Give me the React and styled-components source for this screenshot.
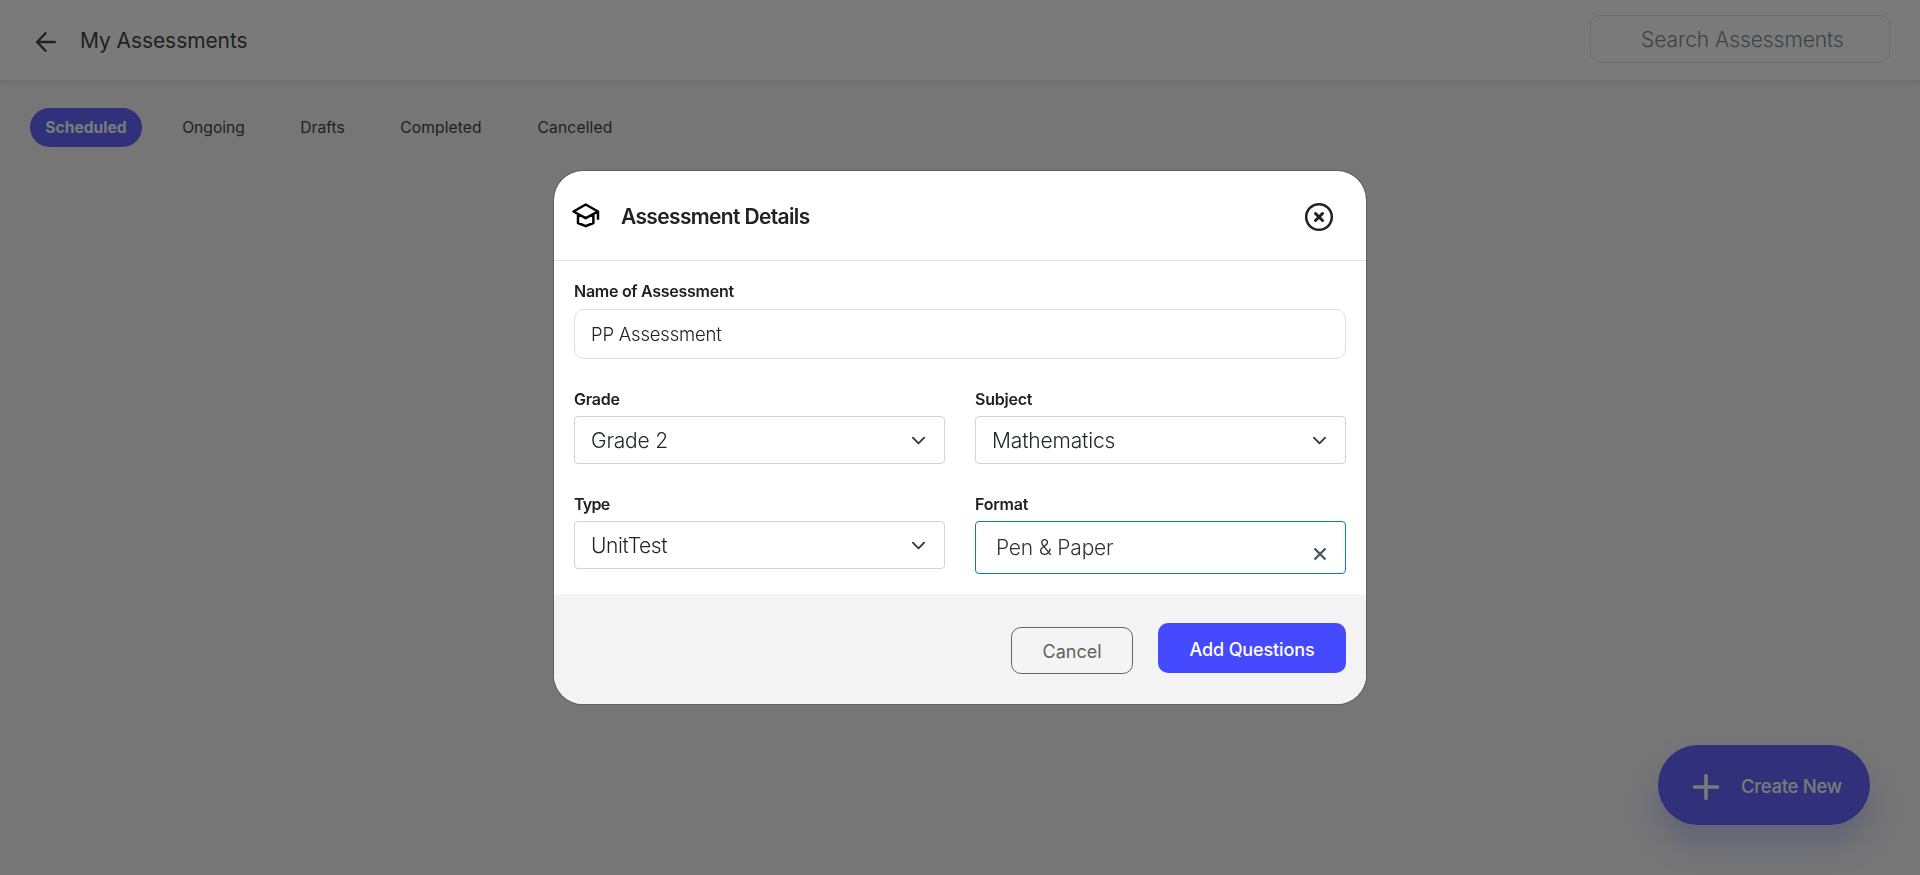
import React from "react";
import styled, { createGlobalStyle } from "styled-components";

const Global = createGlobalStyle`
  * { box-sizing: border-box; }
  html, body, #root { height: 100%; }
  body { margin: 0; background: #f4f4f4; color: #212121; font-family: Inter, "Liberation Sans", sans-serif; overflow: hidden; }
  button, input { font-family: inherit; margin: 0; }
`;

const Page = styled.div`
  height: 875px;
  display: flex;
  flex-direction: column;
`;
const TopBar = styled.header`
  height: 80px;
  flex: none;
  background: #fff;
  box-shadow: 0 2px 5px rgba(0, 0, 0, 0.1);
  display: flex;
  align-items: center;
  padding: 0 30px 0 33px;
`;
const BackIcon = styled.svg`
  width: 26px;
  height: 26px;
  margin-top: 4px;
  fill: none;
  stroke: #212121;
  stroke-width: 2.4;
  stroke-linecap: round;
  stroke-linejoin: round;
`;
const Text = styled.span`
  font-size: ${(p) => p.$size}px;
  font-weight: ${(p) => p.$weight || 400};
  letter-spacing: ${(p) => p.$track || 0}px;
  line-height: 24px;
  white-space: nowrap;
`;
const PageTitle = styled(Text)`
  margin: 2px 0 0 21px;
  flex: 1;
`;
const Search = styled.input`
  width: 300px;
  height: 48px;
  margin-bottom: 2px;
  border: 1px solid #dcdcdc;
  border-radius: 10px;
  background: transparent;
  padding: 0 10px 0 50px;
  font-size: 21px;
  font-weight: 350;
  letter-spacing: -0.05px;
  &::placeholder { color: #6c757d; opacity: 1; }
`;
const Tabs = styled.nav`
  display: flex;
  gap: 25px;
  padding: 28px 30px;
  flex: 1;
`;
const Tab = styled.button`
  width: ${(p) => p.$w}px;
  height: 39px;
  border: 0;
  padding: 0;
  border-radius: 20px;
  white-space: nowrap;
  font-size: 15.6px;
  letter-spacing: ${(p) => p.$track || 0}px;
  font-weight: ${(p) => (p.$active ? 700 : 400)};
  background: ${(p) => (p.$active ? "#464aff" : "transparent")};
  color: ${(p) => (p.$active ? "#fff" : "#212121")};
`;
const CreateButton = styled.button`
  align-self: flex-end;
  width: 212px;
  height: 80px;
  margin: 0 50px 50px 0;
  border: 0;
  border-radius: 40px;
  background: #464aff;
  color: #fff;
  box-shadow: 0 20px 30px rgba(70, 74, 255, 0.28);
  display: flex;
  align-items: center;
  padding: 4px 0 0 34px;
  gap: 21px;
`;
const PlusIcon = styled.svg`
  width: 28px;
  height: 28px;
  fill: none;
  stroke: #fff;
  stroke-width: 3.6;
  stroke-linecap: round;
`;
const CreateLabel = styled(Text)`
  margin-top: -3px;
`;

const Backdrop = styled.div`
  position: fixed;
  inset: 0;
  background: rgba(33, 33, 33, 0.6);
  display: flex;
  justify-content: center;
  align-items: flex-start;
  padding-top: 170px;
`;
const Dialog = styled.section`
  width: 814px;
  height: 535px;
  border: 1px solid rgba(0, 0, 0, 0.2);
  border-radius: 30px;
  background: #fff;
  background-clip: padding-box;
  overflow: hidden;
  display: flex;
  flex-direction: column;
`;
const DialogHeader = styled.div`
  height: 90px;
  flex: none;
  border-bottom: 1px solid #dee0e0;
  display: flex;
  align-items: center;
  padding: 2px 32px 0 17px;
`;
const CapIcon = styled.svg`
  width: 30px;
  height: 30px;
  margin-top: -3px;
  fill: none;
  stroke: #000;
  stroke-width: 2.5;
  stroke-linejoin: round;
`;
const DialogTitle = styled(Text)`
  margin: 1px 0 0 20px;
  flex: 1;
`;
const CloseIcon = styled.svg`
  width: 30px;
  height: 30px;
  margin-top: 1px;
  fill: none;
  stroke: #212121;
  stroke-width: 2.5;
  stroke-linecap: round;
`;
const Form = styled.div`
  height: 333px;
  flex: none;
  padding: 18px 20px 0;
  display: grid;
  grid-template-columns: 371px 371px;
  column-gap: 30px;
  grid-template-rows: 108px 105px auto;
`;
const Field = styled.label`
  display: flex;
  flex-direction: column;
  grid-column: ${(p) => (p.$wide ? "1 / -1" : "auto")};
`;
const Label = styled(Text)`
  height: 30px;
  font-size: 16px;
  font-weight: 600;
  letter-spacing: ${(p) => p.$track || -0.22}px;
`;
const NameBox = styled.div`
  height: 50px;
  border: 1px solid #dee0e0;
  border-radius: 10px;
  display: flex;
  align-items: center;
  padding: 0 16px;
`;
const Select = styled.div`
  height: ${(p) => (p.$focus ? 53 : 48)}px;
  margin-top: -1px;
  border: 1px solid ${(p) => (p.$focus ? "#0d73e0" : "#ced4da")};
  border-radius: 4px;
  display: flex;
  align-items: center;
  justify-content: space-between;
  padding: ${(p) => (p.$focus ? "0 18px 0 20px" : "1px 18px 0 16px")};
  color: ${(p) => (p.$focus ? "#333" : "#212529")};
`;
const Chevron = styled.svg`
  width: 15px;
  height: 15px;
  fill: none;
  stroke: #343a40;
  stroke-width: 2;
  stroke-linecap: round;
  stroke-linejoin: round;
`;
const ClearIcon = styled.svg`
  width: 14px;
  height: 14px;
  margin-top: 12px;
  fill: none;
  stroke: #44566a;
  stroke-width: 2.3;
`;
const Footer = styled.div`
  flex: 1;
  background: #f4f4f4;
  display: flex;
  justify-content: flex-end;
  align-items: flex-start;
  gap: 25px;
  padding: 29px 20px 0;
`;
const Action = styled.button`
  padding: 2px 0 0;
  white-space: nowrap;
  font-size: 18px;
  letter-spacing: ${(p) => p.$track || 0}px;
  border-radius: 10px;
`;
const Cancel = styled(Action)`
  width: 122px;
  height: 47px;
  margin-top: 4px;
  border: 1px solid #666;
  background: transparent;
  color: #616161;
`;
const Primary = styled(Action)`
  width: 188px;
  height: 50px;
  border: 0;
  background: #464aff;
  color: #fff;
  font-weight: 500;
`;

const tabs = [
  { name: "Scheduled", w: 112, active: true },
  { name: "Ongoing", w: 93 },
  { name: "Drafts", w: 75 },
  { name: "Completed", w: 112, track: 0.1 },
  { name: "Cancelled", w: 106, track: 0.15 },
];

const Down = () => (
  <Chevron viewBox="0 0 16 16"><path d="m2 5 6 6 6-6" /></Chevron>
);

export default function App() {
  return (
    <>
      <Global />
      <Page>
        <TopBar>
          <BackIcon viewBox="0 0 26 26"><path d="M21.800 13H4M12.500 4.200L4.200 13l8.300 8.800" /></BackIcon>
          <PageTitle $size={21} $track={-0.08}>My Assessments</PageTitle>
          <Search placeholder="Search Assessments" />
        </TopBar>
        <Tabs>
          {tabs.map((t) => (
            <Tab key={t.name} $w={t.w} $active={t.active} $track={t.track}>{t.name}</Tab>
          ))}
        </Tabs>
        <CreateButton>
          <PlusIcon viewBox="0 0 28 28"><path d="M14 2.500v23M2.500 14h23" /></PlusIcon>
          <CreateLabel $size={18.5} $weight={500} $track={-0.3}>Create New</CreateLabel>
        </CreateButton>
      </Page>
      <Backdrop>
        <Dialog>
          <DialogHeader>
            <CapIcon viewBox="0 0 30 30">
              <path d="M2.500 11.500 14.700 4.500 27 11.500 14.700 18.200zM7 13.500v9.500l7.700 3.200 7.700-3.200v-9.500M27 11.500v8.300" />
            </CapIcon>
            <DialogTitle $size={21} $weight={600} $track={-0.65}>Assessment Details</DialogTitle>
            <CloseIcon viewBox="0 0 30 30">
              <circle cx="15" cy="15" r="12.8" />
              <path strokeWidth="3" d="m11.500 11.500 7 7M18.500 11.500l-7 7" />
            </CloseIcon>
          </DialogHeader>
          <Form>
            <Field $wide>
              <Label $track={-0.27}>Name of Assessment</Label>
              <NameBox><Text $size={18.5} $weight={350} $track={-0.2}>PP Assessment</Text></NameBox>
            </Field>
            <Field>
              <Label>Grade</Label>
              <Select><Text $size={21} $weight={350} $track={-0.2}>Grade 2</Text><Down /></Select>
            </Field>
            <Field>
              <Label>Subject</Label>
              <Select><Text $size={21} $weight={350} $track={-0.15}>Mathematics</Text><Down /></Select>
            </Field>
            <Field>
              <Label $track={-0.7}>Type</Label>
              <Select><Text $size={21} $weight={350} $track={-0.4}>UnitTest</Text><Down /></Select>
            </Field>
            <Field>
              <Label>Format</Label>
              <Select $focus>
                <Text $size={21} $weight={350} $track={-0.2}>Pen &amp; Paper</Text>
                <ClearIcon viewBox="0 0 14 14"><path d="M1.500 1.500l11 11M12.500 1.500l-11 11" /></ClearIcon>
              </Select>
            </Field>
          </Form>
          <Footer>
            <Cancel>Cancel</Cancel>
            <Primary $track={-0.12}>Add Questions</Primary>
          </Footer>
        </Dialog>
      </Backdrop>
    </>
  );
}
